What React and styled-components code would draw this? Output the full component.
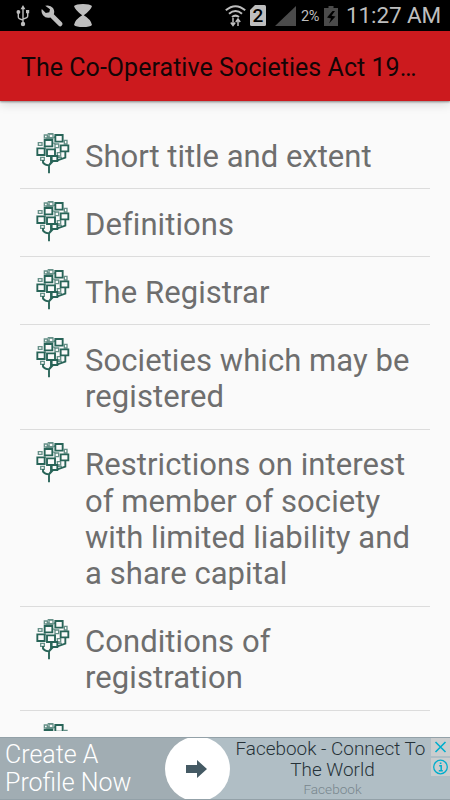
import styled, { createGlobalStyle } from 'styled-components';

const sections = [
	['Short title and extent'],
	['Definitions'],
	['The Registrar'],
	['Societies which may be', 'registered'],
	['Restrictions on interest', 'of member of society', 'with limited liability and', 'a share capital'],
	['Conditions of', 'registration'],
];

export default function App() {
	return (
		<Screen>
			<GlobalStyle />
			<StatusBar>
				<StatusLeft>
					<UsbIcon />
					<WrenchIcon />
					<HourglassIcon />
				</StatusLeft>
				<StatusRight>
					<WifiIcon />
					<SimIcon />
					<SignalIcon />
					<Percent>2%</Percent>
					<BatteryIcon />
					<Clock>11:27 AM</Clock>
				</StatusRight>
			</StatusBar>
			<AppBar>
				<Title>The Co-Operative Societies Act 19…</Title>
			</AppBar>
			<List>
				{sections.map((lines) => (
					<Row key={lines[0]}>
						<TreeIcon />
						<Label>
							{lines.map((line) => (
								<LabelLine key={line} $tight={line.startsWith('Short')}>
									{line}
								</LabelLine>
							))}
						</Label>
					</Row>
				))}
				<Row>
					<TreeIcon />
				</Row>
			</List>
			<Ad>
				<AdLeft>
					<span>Create A</span>
					<span>Profile Now</span>
				</AdLeft>
				<AdCircle>
					<svg width="65" height="62" viewBox="0 0 65 62">
						<circle cx="32.5" cy="31" r="32.5" fill="#fff" />
						<path d="M21 27h11v-5l10 9-10 9v-5H21z" fill="#455a64" />
					</svg>
				</AdCircle>
				<AdText>
					<AdHeadline>Facebook - Connect To</AdHeadline>
					<AdHeadline $shift={4}>The World</AdHeadline>
					<AdSource>Facebook</AdSource>
				</AdText>
				<AdControls>
					<AdButton>
						<svg width="19" height="18" viewBox="0 0 19 18">
							<path d="M4.5 4l10 10M14.5 4l-10 10" stroke="#00aecd" strokeWidth="1.6" />
						</svg>
					</AdButton>
					<AdButton>
						<svg width="19" height="18" viewBox="0 0 19 18">
							<circle cx="9.5" cy="9" r="6.8" fill="none" stroke="#00aecd" strokeWidth="1.3" />
							<path d="M8.2 7.8h2v5M7.8 12.7h4M8.800 5.200h1.600" fill="none" stroke="#00aecd" strokeWidth="1.5" />
						</svg>
					</AdButton>
				</AdControls>
			</Ad>
		</Screen>
	);
}

function UsbIcon() {
	return (
		<svg width="14" height="22" viewBox="0 0 14 22" fill="none" stroke="#bebebe" strokeWidth="1.4">
			<path d="M7 4v14M2.3 8v4q0 2 4.7 3M11.7 8v3q0 2-4.7 3" />
			<path d="M7 0l2.4 4.2H4.6zM10 5h3.2v3.2H10z" fill="#bebebe" stroke="none" />
			<circle cx="2.4" cy="7" r="1.9" fill="#bebebe" stroke="none" />
			<circle cx="7" cy="19" r="2.2" fill="#bebebe" stroke="none" />
		</svg>
	);
}

function WrenchIcon() {
	return (
		<svg width="22" height="22" viewBox="0 0 22 22">
			<path
				d="M4.2.8Q9-.6 12 3q2 3 .8 6.3l8 8q1.400 1.500 0 3.300t-3.400 0l-8-8.200Q5 13.700 2 10.200-.2 7 .8 4l4 4 3.500-.8.700-3z"
				fill="#bebebe"
			/>
		</svg>
	);
}

function HourglassIcon() {
	return (
		<svg width="18" height="23" viewBox="0 0 18 23">
			<path
				d="M0 2Q2 0 9 0t9 2q-1 4-8.200 9.300Q17 15.500 18 21q-2 2-9 2t-9-2q1-5.500 8.200-9.700Q1 6 0 2z"
				fill="#bebebe"
			/>
		</svg>
	);
}

function WifiIcon() {
	return (
		<svg width="21" height="22" viewBox="0 0 21 22" fill="none" stroke="#bebebe" strokeWidth="2">
			<path d="M.8 5.300Q10.500-2.800 20.200 5.300M4 8.800q6.500-5.500 13 0M7 12q3.500-2.800 7 0" />
			<path d="M8 13v7M5.800 17.500L8 20.500l2.200-3M13 21v-7M10.800 17l2.200-3 2.200 3" strokeWidth="1.5" />
		</svg>
	);
}

function SimIcon() {
	return (
		<SimCard>
			<svg width="16" height="21" viewBox="0 0 16 21">
				<path d="M5 0h9.500Q16 0 16 1.500v18q0 1.500-1.500 1.500h-13Q0 21 0 19.500V5z" fill="#bebebe" />
			</svg>
			<SimNumber>2</SimNumber>
		</SimCard>
	);
}

function SignalIcon() {
	return (
		<svg width="21" height="20" viewBox="0 0 21 20">
			<path d="M21 0v20H0z" fill="#4b4b4b" />
		</svg>
	);
}

function BatteryIcon() {
	return (
		<svg width="14" height="20" viewBox="0 0 14 20">
			<path d="M4.500 0h5v2H14v18H0V2h4.500z" fill="#4b4b4b" />
			<path d="M8.500 5L3 11.500l4 1L5 17.500l6.500-7-4-.8L11 5z" fill="#000" />
		</svg>
	);
}

function TreeIcon() {
	return (
		<TreeSvg viewBox="33 25 102 123" fill="none" stroke="#286458" strokeWidth="5.6">
			<path d="M72 146v-24M54 106v8q6 8 18 8M78 94v20l-6 8M84 109l-12 13M121 80v19l-24 8" />
			<g strokeWidth="4" opacity=".7">
				<path d="M40 54h11v8H40zM58 31h9v9h-9zM72 28h12v11H72zM90 58h11v11H90z" />
				<path d="M47 98h11v9H47zM97 84h10v10H97zM118 47h8v11h-8z" />
				<path d="M66 42l7-7M68 27h16M63 41h22M85 40l6-4M85 54l8 6M90 70v12M99 98h12M60 68v6" />
			</g>
			<g fill="#fafafa">
				<path d="M59 46h23v19H59zM91 31h22v20H91zM107 62h23v18h-23z" />
				<path d="M80 94h17v15H80zM37 71h22v20H37zM66 74h24v20H66z" />
			</g>
		</TreeSvg>
	);
}

const GlobalStyle = createGlobalStyle`
	body {
		margin: 0;
		overflow: hidden;
		font-family: Roboto, sans-serif;
	}
	svg {
		display: block;
		flex-shrink: 0;
	}
`;

const Screen = styled.div`
	display: flex;
	flex-direction: column;
	width: 450px;
	height: 800px;
	overflow: hidden;
	background: #fafafa;
`;

const StatusBar = styled.div`
	display: flex;
	justify-content: space-between;
	box-sizing: border-box;
	height: 31px;
	flex-shrink: 0;
	padding: 0 9px 0 16px;
	background: #000;
	color: #bebebe;
`;

const StatusLeft = styled.div`
	display: flex;
	align-items: center;
	gap: 11px;
`;

const StatusRight = styled.div`
	display: flex;
	align-items: center;
	white-space: nowrap;
`;

const SimCard = styled.div`
	position: relative;
	margin: 0 9px 0 4px;
`;

const SimNumber = styled.span`
	position: absolute;
	inset: 0;
	color: #000;
	font-size: 19px;
	font-weight: 500;
	line-height: 22px;
	text-align: center;
`;

const Percent = styled.span`
	width: 19px;
	margin: 1px 4px 0 5px;
	font-size: 14.500px;
	letter-spacing: -0.5px;
`;

const Clock = styled.span`
	margin-left: 8px;
	font-size: 22.500px;
	letter-spacing: -0.12px;
	line-height: 31px;
`;

const AppBar = styled.header`
	display: flex;
	align-items: center;
	height: 70px;
	flex-shrink: 0;
	padding-left: 21px;
	background: #cc1a1e;
	box-shadow: 0 1px 2px rgba(0, 0, 0, 0.4), 0 3px 10px rgba(0, 0, 0, 0.15);
	z-index: 1;
`;

const Title = styled.h1`
	margin: 2px 0 0;
	color: #140506;
	font-size: 25px;
	font-weight: 400;
	letter-spacing: 0.04px;
	white-space: nowrap;
`;

const List = styled.div`
	height: 610px;
	margin-top: 20px;
	padding: 0 20px;
	overflow: hidden;
	flex-shrink: 0;
`;

const Row = styled.div`
	display: flex;
	align-items: flex-start;
	padding: 17.600px 0 13.200px 15px;
	border-bottom: 1px solid #dcdcdc;
`;

const TreeSvg = styled.svg`
	width: 34px;
	height: 41px;
	margin: -5.400px 15px -20px 1px;
`;

const Label = styled.div`
	display: flex;
	flex-direction: column;
	color: #6e6e6e;
	font-size: 31px;
	line-height: 36.300px;
	white-space: nowrap;
`;

const LabelLine = styled.span`
	letter-spacing: ${(props) => (props.$tight ? 0 : '0.07px')};
`;

const Ad = styled.div`
	display: flex;
	box-sizing: border-box;
	height: 63px;
	margin-top: 6px;
	flex-shrink: 0;
	border-top: 1px solid #93a1a8;
	border-bottom: 1px solid #93a1a8;
	background: #b0bec5;
	overflow: hidden;
`;

const AdLeft = styled.div`
	display: flex;
	flex-direction: column;
	box-sizing: border-box;
	width: 197px;
	padding: 2.500px 0 0 5px;
	flex-shrink: 0;
	background: #a1adb3;
	color: #fff;
	font-size: 25px;
	font-weight: 300;
	line-height: 28.500px;
	white-space: nowrap;
`;

const AdCircle = styled.div`
	margin-left: -32px;
	flex-shrink: 0;
`;

const AdText = styled.div`
	display: flex;
	flex-direction: column;
	width: 201px;
	flex-shrink: 0;
	text-align: center;
	white-space: nowrap;
`;

const AdHeadline = styled.span`
	padding-left: ${(props) => props.$shift || 0}px;
	color: #263238;
	font-size: 18.900px;
	font-weight: 300;
	line-height: 21px;
`;

const AdSource = styled.span`
	padding-left: 4px;
	color: #78868d;
	font-size: 13.600px;
	font-weight: 300;
	line-height: 18px;
`;

const AdControls = styled.div`
	display: flex;
	flex-direction: column;
	gap: 2px;
`;

const AdButton = styled.div`
	width: 19px;
	height: 18px;
	background: #cbcdce;
`;
